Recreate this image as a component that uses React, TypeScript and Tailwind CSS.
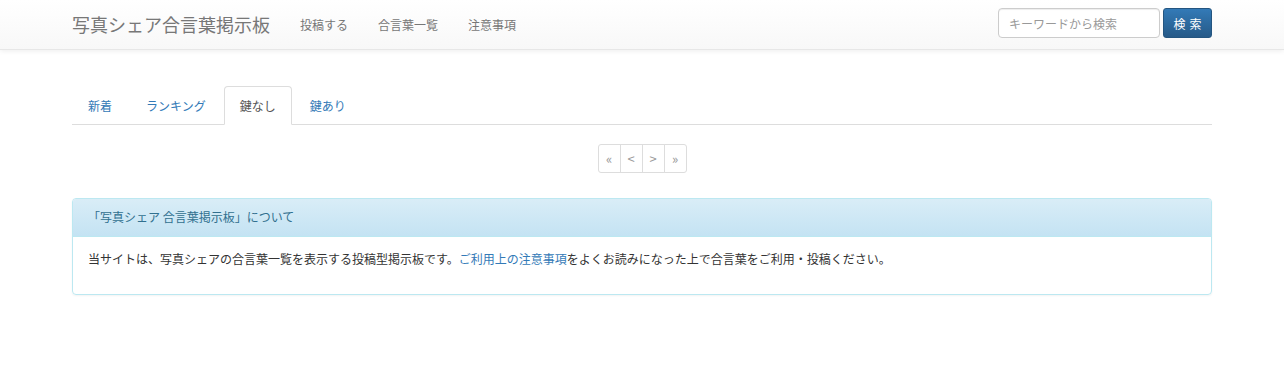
import React from "react";

const font = { fontFamily: '"Noto Sans CJK JP", "Noto Sans", sans-serif' };

export default function App() {
  return (
    <div className="min-h-[365px] bg-white text-[12px] leading-[17px] text-[#333]" style={font}>
      <nav className="h-[50px] border-b border-[#e7e7e7] bg-gradient-to-b from-white to-[#f8f8f8] shadow-[0_1px_5px_rgba(0,0,0,0.075)]">
        <div className="mx-auto flex h-[49px] w-[1140px] items-center">
          <a className="-mt-px pr-[15px] text-[18px] leading-[20px] text-[#777]">写真シェア合言葉掲示板</a>
          <ul className="flex">
            <li><a className="block px-[15px] text-[#777]">投稿する</a></li>
            <li><a className="block px-[15px] text-[#777]">合言葉一覧</a></li>
            <li><a className="block px-[15px] text-[#777]">注意事項</a></li>
          </ul>
          <div className="ml-auto flex items-center gap-[3px] self-start pt-[8px]">
            <input
              placeholder="キーワードから検索"
              className="h-[30px] w-[162px] rounded-[4px] border border-[#ccc] bg-white px-[10px] text-[12px] text-[#555] shadow-[inset_0_1px_1px_rgba(0,0,0,0.075)] outline-none placeholder:text-[#999]"
              style={font}
            />
            <button
              className="flex h-[30px] w-[49px] items-center justify-center rounded-[3px] border border-[#245580] bg-gradient-to-b from-[#337ab7] to-[#265a88] text-[12px] text-white"
              style={font}
            >
              検<span className="inline-block w-[4px]" />索
            </button>
          </div>
        </div>
      </nav>

      <div className="mx-auto w-[1140px] pt-[36px]">
        <ul className="flex border-b border-[#ddd]">
          <li className="mr-[2px] -mb-px">
            <a className="block rounded-t-[4px] border border-transparent px-[15px] py-[10px] text-[#337ab7]">新着</a>
          </li>
          <li className="mr-[2px] -mb-px">
            <a className="block rounded-t-[4px] border border-transparent px-[15px] py-[10px] text-[#337ab7]">ランキング</a>
          </li>
          <li className="mr-[2px] -mb-px">
            <a className="block rounded-t-[4px] border border-[#ddd] border-b-transparent bg-white px-[15px] py-[10px] text-[#555]">鍵なし</a>
          </li>
          <li className="mr-[2px] -mb-px">
            <a className="block rounded-t-[4px] border border-transparent px-[15px] py-[10px] text-[#337ab7]">鍵あり</a>
          </li>
        </ul>

        <div className="flex justify-center pt-[19px]">
          <ul className="flex">
            {["«", "<", ">", "»"].map((c, i) => (
              <li key={i}>
                <span
                  className={`-ml-px flex h-[29px] w-[23px] items-center justify-center border border-[#ddd] bg-white text-[13px] text-[#999] ${
                    i === 0 ? "ml-0 rounded-l-[3px]" : ""
                  } ${i === 3 ? "rounded-r-[3px]" : ""}`}
                >
                  {c}
                </span>
              </li>
            ))}
          </ul>
        </div>

        <div className="mt-[25px] overflow-hidden rounded-[4px] border border-[#bce8f1] shadow-[0_1px_2px_rgba(0,0,0,0.05)]">
          <div className="border-b border-[#bce8f1] bg-gradient-to-b from-[#d9edf7] to-[#c4e3f3] px-[15px] pt-[9px] pb-[11px] text-[#31708f]">
            「写真シェア 合言葉掲示板」について
          </div>
          <div className="px-[15px] pt-[13px] pb-[15px]">
            <p className="mb-[12px]">
              当サイトは、写真シェアの合言葉一覧を表示する投稿型掲示板です。
              <a className="text-[#337ab7]">ご利用上の注意事項</a>
              をよくお読みになった上で合言葉をご利用・投稿ください。
            </p>
          </div>
        </div>
      </div>
    </div>
  );
}
